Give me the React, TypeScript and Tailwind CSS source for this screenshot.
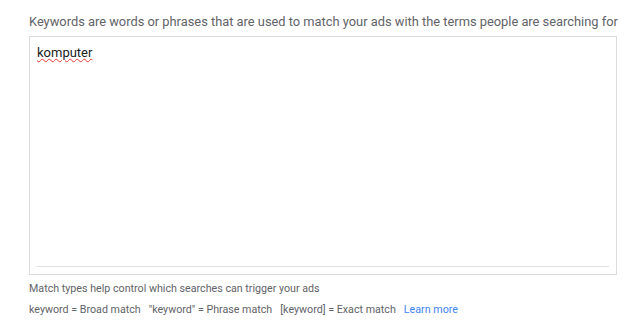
export default function App() {
  return (
    <div className="w-[636px] h-[333px] bg-white font-['Roboto','Liberation_Sans',sans-serif] pl-[29px] pt-[13px]">
      <p className="text-[12.85px] leading-[18px] whitespace-nowrap text-[#5f6368]">
        Keywords are words or phrases that are used to match your ads with the terms people are searching for
      </p>
      <div className="mt-[5px] w-[588px] h-[239px] border border-[#dadce0] px-[7px] pt-[7px] flex flex-col">
        <div className="flex-1 text-[13px] leading-[18px] text-[#202124]">
          <span className="underline decoration-wavy decoration-[#e53935] decoration-1 underline-offset-1">komputer</span>
        </div>
        <div className="h-px bg-[#e0e0e0] mb-[7px]" />
      </div>
      <p className="mt-[7px] text-[10.7px] leading-[14px] text-[#5f6368]">
        Match types help control which searches can trigger your ads
      </p>
      <p className="mt-[7px] text-[10.7px] leading-[14px] text-[#5f6368] flex gap-[8px]">
        <span>keyword = Broad match</span>
        <span>"keyword" = Phrase match</span>
        <span>[keyword] = Exact match</span>
        <span className="text-[#4285f4]">Learn more</span>
      </p>
    </div>
  );
}
